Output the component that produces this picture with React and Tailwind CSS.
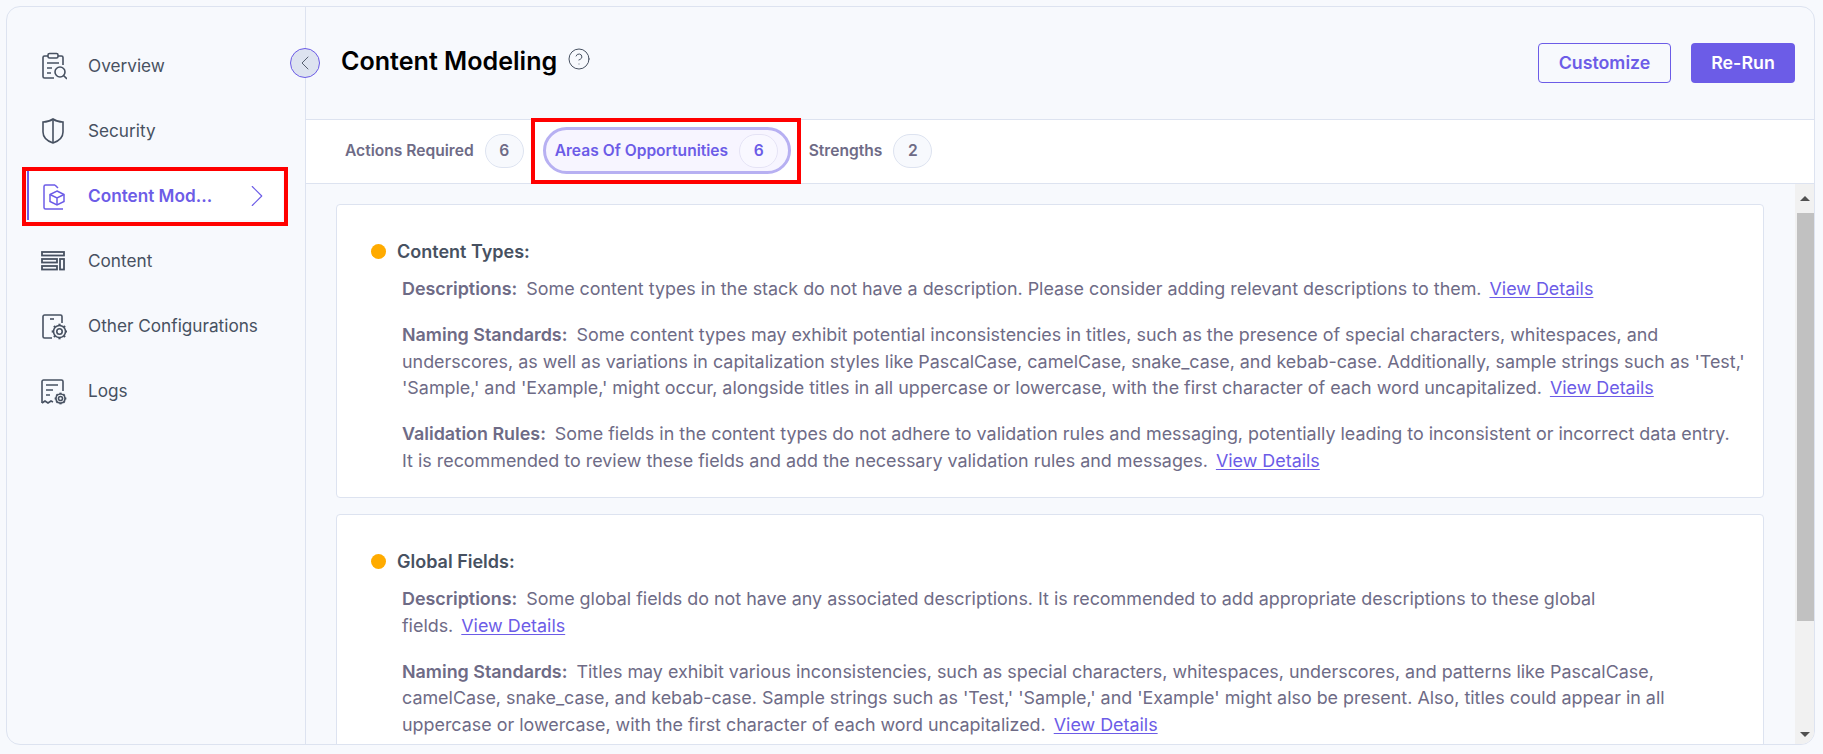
import React from "react";
import { ChevronLeft, ChevronRight, CircleHelp } from "lucide-react";

const FONT = { fontFamily: "Inter, sans-serif" };

function IconOverview({ className }) {
  return (
    <svg viewBox="0 0 28 28" fill="none" stroke="currentColor" strokeWidth="1.6" className={className}>
      <path d="M9 4H5.500C4.700 4 4 4.700 4 5.500v19C4 25.300 4.700 26 5.500 26H15" />
      <path d="M19 4h3.500c.8 0 1.500.7 1.500 1.500V13" />
      <rect x="9" y="1.500" width="10" height="4.500" rx="1.500" />
      <path d="M8 11h12M8 16h5M8 21h4" />
      <circle cx="21" cy="20" r="5" />
      <path d="M24.500 23.500L28 27" />
    </svg>
  );
}

function IconShield({ className }) {
  return (
    <svg viewBox="0 0 28 28" fill="none" stroke="currentColor" strokeWidth="1.6" className={className}>
      <path d="M14 2c3 2.200 6.500 3 10 3v10c0 5-4 9-10 11C8 24 4 20 4 15V5c3.500 0 7-.8 10-3z" />
      <path d="M14 2v24" />
    </svg>
  );
}

function IconModel({ className }) {
  return (
    <svg viewBox="0 0 28 28" fill="none" stroke="currentColor" strokeWidth="1.500" className={className}>
      <path d="M16 3H6.500C5.700 3 5 3.700 5 4.500v21C5 26.300 5.700 27 6.500 27H24" />
      <path d="M16 3l3 3" />
      <path d="M18 9l7 3.500v7L18 23l-7-3.500v-7L18 9z" />
      <path d="M11 12.500l7 3.500 7-3.500M18 16v7" />
    </svg>
  );
}

function IconContent({ className }) {
  return (
    <svg viewBox="0 0 28 28" fill="none" stroke="currentColor" strokeWidth="1.800" className={className}>
      <rect x="3" y="5" width="22" height="3.500" />
      <rect x="3" y="12" width="15" height="3.500" />
      <rect x="3" y="19" width="15" height="3.500" />
      <rect x="21" y="12" width="4" height="10.500" />
    </svg>
  );
}

function Gear({ cx, cy, r }) {
  const teeth = [0, 45, 90, 135, 180, 225, 270, 315];
  return (
    <g>
      <circle cx={cx} cy={cy} r={r} />
      <circle cx={cx} cy={cy} r={r * 0.45} />
      {teeth.map((deg) => (
        <path
          key={deg}
          d={`M${cx} ${cy - r}v${-r * 0.3}`}
          transform={`rotate(${deg} ${cx} ${cy})`}
          strokeWidth="2.200"
        />
      ))}
    </g>
  );
}

function IconConfig({ className }) {
  return (
    <svg viewBox="0 0 28 28" fill="none" stroke="currentColor" strokeWidth="1.600" className={className}>
      <path d="M13 26H5.500C4.700 26 4 25.300 4 24.500v-20C4 3.700 4.700 3 5.500 3h16C22.300 3 23 3.700 23 4.500V11" />
      <path d="M11 7h4" />
      <Gear cx={20.500} cy={19.500} r={6} />
    </svg>
  );
}

function IconLogs({ className }) {
  return (
    <svg viewBox="0 0 28 28" fill="none" stroke="currentColor" strokeWidth="1.600" className={className}>
      <path d="M3 26V4.500C3 3.700 3.700 3 4.500 3h18C23.300 3 24 3.700 24 4.500V14" />
      <path d="M3 26l3-2 3 2 3-2 2 1" />
      <path d="M7 8h12M7 13h7M7 18h4" />
      <Gear cx={21.500} cy={21.500} r={4.500} />
    </svg>
  );
}

const NAV = [
  { label: "Overview", Icon: IconOverview },
  { label: "Security", Icon: IconShield },
  { label: "Content Mod...", Icon: IconModel, active: true },
  { label: "Content", Icon: IconContent },
  { label: "Other Configurations", Icon: IconConfig },
  { label: "Logs", Icon: IconLogs },
];

function Sidebar() {
  return (
    <aside className="w-[299px] shrink-0 border-r border-[#dde3f0] pt-[26px] pl-[20px] pr-[22px]">
      {NAV.map(({ label, Icon, active }) => (
        <div
          key={label}
          className={`h-[65px] flex items-center text-[17.2px] ${
            active ? "text-[#6c5ce7] font-semibold" : "text-[#475161]"
          }`}
        >
          <div
            className={`h-[49px] w-full flex items-center pl-[10px] ${
              active ? "bg-white border-l-2 border-[#6c5ce7]" : "border-l-2 border-transparent"
            }`}
          >
            <Icon className="w-[28px] h-[28px] shrink-0" />
            <span className="ml-[21px] whitespace-nowrap">{label}</span>
            {active && <ChevronRight className="ml-auto mr-[7px] text-[#6c5ce7]" size={38} strokeWidth={0.7} />}
          </div>
        </div>
      ))}
    </aside>
  );
}

function Badge({ children, active }) {
  return (
    <span
      className={`ml-[11px] w-[39px] h-[34px] rounded-full flex items-center justify-center border text-[15.6px] font-semibold ${
        active ? "border-[#e5e3f5] bg-[#f9f8ff] text-[#6c5ce7]" : "border-[#dde3f0] bg-[#f7f9fd] text-[#6e6b86]"
      }`}
    >
      {children}
    </span>
  );
}

function Tabs() {
  return (
    <div className="h-[65px] bg-white border-t border-b border-[#dde3f0] flex items-center pl-[39px] pb-[2px] shrink-0 whitespace-nowrap">
      <div className="flex items-center text-[15.6px] font-semibold text-[#6e6b86]">
        Actions Required
        <Badge>6</Badge>
      </div>
      <div className="ml-[19px] h-[47px] w-[248px] shrink-0 rounded-full border-[3px] border-[#b7b0f2] bg-[#f7f5ff] flex items-center pl-[9px] text-[15.6px] font-semibold text-[#6c5ce7]">
        Areas Of Opportunities
        <Badge active>6</Badge>
      </div>
      <div className="ml-[18px] flex items-center text-[15.6px] font-semibold text-[#6e6b86]">
        Strengths
        <Badge>2</Badge>
      </div>
    </div>
  );
}

function ViewDetails() {
  return <a className="ml-[8px] text-[#6c5ce7] underline underline-offset-2">View Details</a>;
}

function Para({ title, children }) {
  return (
    <p className="mt-[19.500px] first:mt-0 text-[17.900px] leading-[26.500px] text-[#6e6b86]">
      <strong className="font-semibold mr-[9px]">{title}:</strong>
      {children}
      <ViewDetails />
    </p>
  );
}

function Card({ title, children }) {
  return (
    <section className="bg-white border border-[#dde3f0] rounded-[4px] pt-[34px] pb-[23px] pl-[34px] pr-[8px] mb-[16px]">
      <div className="flex items-center h-[24px]">
        <span className="w-[15px] h-[15px] rounded-full bg-[#ffab00]" />
        <h3 className="ml-[11px] text-[18px] font-semibold text-[#475161]">{title}</h3>
      </div>
      <div className="mt-[13px] ml-[31px]">{children}</div>
    </section>
  );
}

function Scrollbar() {
  return (
    <div className="w-[19px] shrink-0 bg-[#f1f1f1] flex flex-col items-end">
      <div className="w-full h-[29px] flex items-center justify-center">
        <div className="w-0 h-0 border-l-[5px] border-r-[5px] border-b-[5px] border-l-transparent border-r-transparent border-b-[#505050]" />
      </div>
      <div className="w-[17px] h-[408px] bg-[#c1c1c1]" />
      <div className="mt-auto w-full h-[20px] flex items-center justify-center">
        <div className="w-0 h-0 border-l-[5px] border-r-[5px] border-t-[5px] border-l-transparent border-r-transparent border-t-[#505050]" />
      </div>
    </div>
  );
}

export default function App() {
  return (
    <div className="h-screen bg-[#f7f9fd] p-[6px] pr-[8px] pb-[9px] overflow-hidden" style={FONT}>
      <div className="relative h-full flex border border-[#dde3f0] rounded-[14px] overflow-hidden bg-[#f7f9fd]">
        <Sidebar />

        {/* Collapse toggle */}
        <button className="absolute left-[283px] top-[41px] w-[30px] h-[30px] rounded-full bg-[#dde3f0] border border-[#6c5ce7] flex items-center justify-center text-[#475161]">
          <ChevronLeft size={24} strokeWidth={0.9} />
        </button>

        <main className="flex-1 min-w-0 flex flex-col">
          <header className="h-[112px] shrink-0 flex items-start justify-between pl-[35px] pr-[19px] pt-[36px]">
            <div className="flex items-center h-[40px] -mt-[1px]">
              <h1 className="text-[25.100px] font-semibold text-black">Content Modeling</h1>
              <CircleHelp className="ml-[10px] -mt-[7px] text-[#475161]" size={24} strokeWidth={1} />
            </div>
            <div className="flex gap-[20px]">
              <button className="w-[133px] h-[40px] rounded-[4px] border border-[#6c5ce7] text-[#6c5ce7] text-[17.800px] font-semibold">
                Customize
              </button>
              <button className="w-[104px] h-[40px] rounded-[4px] bg-[#6c5ce7] text-white text-[17.800px] font-semibold">
                Re-Run
              </button>
            </div>
          </header>

          <Tabs />

          <div className="flex-1 min-h-0 flex">
            <div className="flex-1 min-w-0 overflow-hidden pt-[20px] pl-[30px] pr-[31px]">
              <Card title="Content Types:">
                <Para title="Descriptions">
                  Some content types in the stack do not have a description. Please consider adding relevant descriptions to them.
                </Para>
                <Para title="Naming Standards">
                  Some content types may exhibit potential inconsistencies in titles, such as the presence of special characters, whitespaces, and
                  <br />
                  underscores, as well as variations in capitalization styles like PascalCase, camelCase, snake_case, and kebab-case. Additionally, sample strings such as 'Test,'
                  <br />
                  'Sample,' and 'Example,' might occur, alongside titles in all uppercase or lowercase, with the first character of each word uncapitalized.
                </Para>
                <Para title="Validation Rules">
                  Some fields in the content types do not adhere to validation rules and messaging, potentially leading to inconsistent or incorrect data entry.
                  <br />
                  It is recommended to review these fields and add the necessary validation rules and messages.
                </Para>
              </Card>
              <Card title="Global Fields:">
                <Para title="Descriptions">
                  Some global fields do not have any associated descriptions. It is recommended to add appropriate descriptions to these global
                  <br />
                  fields.
                </Para>
                <Para title="Naming Standards">
                  Titles may exhibit various inconsistencies, such as special characters, whitespaces, underscores, and patterns like PascalCase,
                  <br />
                  camelCase, snake_case, and kebab-case. Sample strings such as 'Test,' 'Sample,' and 'Example' might also be present. Also, titles could appear in all
                  <br />
                  uppercase or lowercase, with the first character of each word uncapitalized.
                </Para>
              </Card>
            </div>
            <Scrollbar />
          </div>
        </main>

        {/* Red annotation boxes */}
        <div className="absolute left-[15px] top-[160px] w-[266px] h-[59px] border-[4px] border-[#ff0000] pointer-events-none" />
        <div className="absolute left-[524px] top-[111px] w-[270px] h-[66px] border-[4px] border-[#ff0000] pointer-events-none" />
      </div>
    </div>
  );
}
